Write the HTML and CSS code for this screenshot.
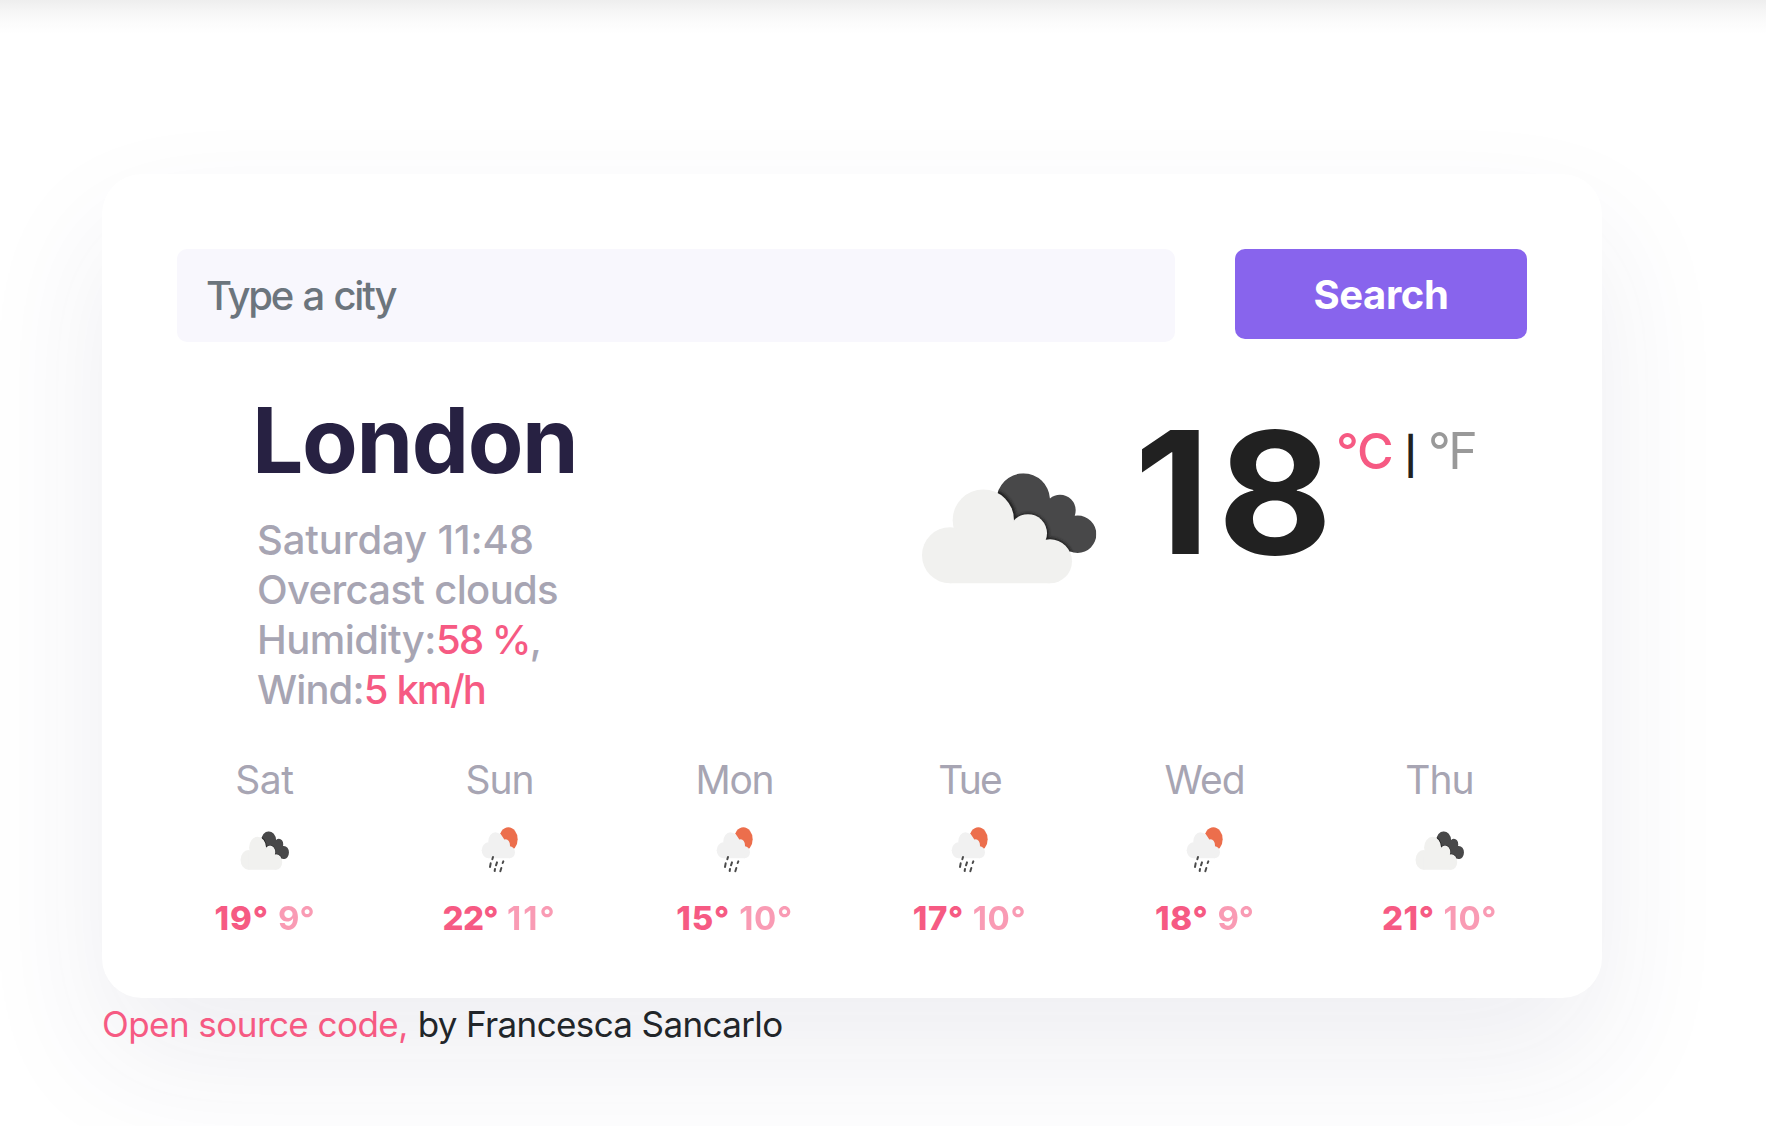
FILE: index.html
```
<!DOCTYPE html>
<html lang="en">
<head>
<meta charset="utf-8">
<title>Weather</title>
<link rel="stylesheet" href="styles.css">
</head>
<body>
<svg class="defs" width="0" height="0">
  <defs>
    <clipPath id="dark-shape">
      <circle cx="370" cy="150" r="80"/><circle cx="480" cy="181" r="47"/><circle cx="533" cy="252" r="56"/>
      <path d="M300 128L370 150L480 181L533 252L508 306L440 275L345 215Z"/>
    </clipPath>
    <filter id="soft" x="-20%" y="-20%" width="140%" height="140%"><feGaussianBlur stdDeviation="4"/></filter>
    <symbol id="overcast" viewBox="60 60 540 350" preserveAspectRatio="none">
      <g clip-path="url(#dark-shape)">
        <rect x="280" y="60" width="320" height="260" fill="#484849"/>
        <g fill="#1c1c1d" filter="url(#soft)"><circle cx="250" cy="210" r="99"/><circle cx="384" cy="251" r="62"/><circle cx="450" cy="333" r="70"/></g>
      </g>
      <g fill="#f1f1ef">
        <circle cx="250" cy="210" r="92"/><circle cx="384" cy="249" r="57"/><circle cx="450" cy="333" r="66"/><circle cx="150" cy="315" r="84"/>
        <path d="M150 399V250L250 200L384 245L450 290V399Z"/>
      </g>
    </symbol>
    <symbol id="rain" viewBox="60 45 120 150" preserveAspectRatio="none">
      <ellipse cx="145" cy="88" rx="28" ry="36" fill="#ec6e4c"/>
      <path d="M112 70L122 72L134 90L143 105L162 118L158 135H120Z" fill="#f1f1f1"/>
      <g fill="#f1f1f1">
        <ellipse cx="86" cy="121" rx="21" ry="24"/><ellipse cx="106" cy="94" rx="21" ry="27"/><ellipse cx="137" cy="106" rx="13" ry="18"/><ellipse cx="149" cy="127" rx="16" ry="18"/>
        <path d="M86 145V105L106 90L137 100L149 120V145Z"/>
      </g>
      <g stroke="#4a4a4a" stroke-width="6" stroke-linecap="round">
        <path d="M99 141L97 148M92 160L90 171M111 157L108 166M130 154L128 159M105 177L104 183M124 174L121 184"/>
      </g>
    </symbol>
  </defs>
</svg>
<header class="top-edge"></header>
<main class="container">
  <section class="card">
    <form class="search">
      <input class="search-input" type="text" placeholder="Type a city">
      <button class="search-button" type="button">Search</button>
    </form>
    <div class="current">
      <div class="place">
        <h1 class="city">London</h1>
        <ul class="details">
          <li class="date">Saturday 11:48</li>
          <li class="sky">Overcast clouds</li>
          <li><span class="humidity">Humidity:</span><span class="value humidity-value">58 %</span>,</li>
          <li><span class="wind">Wind:</span><span class="value wind-value">5 km/h</span></li>
        </ul>
      </div>
      <svg class="current-icon"><use href="#overcast"/></svg>
      <div class="temperature"><span>18</span></div>
      <div class="units"><span class="celsius">°C</span><span class="bar">|</span><span class="fahrenheit">°F</span></div>
    </div>
    <div class="forecast">
      <div class="day"><div class="name sat">Sat</div><svg class="icon cloudy"><use href="#overcast"/></svg><div class="temps"><b class="ls1">19°</b><span class="ls0">9°</span></div></div>
      <div class="day"><div class="name">Sun</div><svg class="icon rainy"><use href="#rain"/></svg><div class="temps"><b class="lsn">22°</b><span class="ls2">11°</span></div></div>
      <div class="day"><div class="name mon">Mon</div><svg class="icon rainy"><use href="#rain"/></svg><div class="temps"><b class="ls1">15°</b><span class="ls05">10°</span></div></div>
      <div class="day"><div class="name tue">Tue</div><svg class="icon rainy"><use href="#rain"/></svg><div class="temps"><b class="ls05">17°</b><span class="ls05">10°</span></div></div>
      <div class="day"><div class="name">Wed</div><svg class="icon rainy"><use href="#rain"/></svg><div class="temps"><b class="ls05">18°</b><span class="ls0">9°</span></div></div>
      <div class="day"><div class="name">Thu</div><svg class="icon cloudy"><use href="#overcast"/></svg><div class="temps"><b class="ls05">21°</b><span class="ls05">10°</span></div></div>
    </div>
  </section>
  <footer class="footer"><a class="source">Open source code,</a><span class="author">by Francesca Sancarlo</span></footer>
</main>
</body>
</html>
```
FILE: styles.css
```
* { box-sizing: border-box; }
body {
  margin: 0;
  height: 1126px;
  overflow: hidden;
  background: #fff;
  color: #212529;
  font-family: Inter, "Liberation Sans", sans-serif;
}
.defs { display: block; }
.top-edge {
  height: 34px;
  background: linear-gradient(#eeeeee, #f5f5f5 10px, #fafafa 19px, #fdfdfd 27px, #fff);
}
.container { width: 1500px; margin: 140px 0 0 102px; }
.card {
  height: 824px;
  padding: 75px;
  border-radius: 40px;
  background: #fff;
  box-shadow: 0 60px 130px rgba(50, 50, 93, 0.083);
}
.search { display: flex; gap: 60px; align-items: flex-start; }
.search-input {
  width: 998px;
  height: 93px;
  padding: 0 29px;
  border: 0;
  border-radius: 10px;
  background: #f8f7fd;
  font: 450 40px Inter, "Liberation Sans", sans-serif;
  letter-spacing: -2.2px;
  word-spacing: 2px;
}
.search-input::placeholder { color: #6c757d; opacity: 1; }
.search-button {
  width: 292px;
  height: 90px;
  padding: 0;
  border: 0;
  border-radius: 10px;
  background: #8864ed;
  color: #fff;
  font: 750 40px Inter, "Liberation Sans", sans-serif;
  letter-spacing: -0.4px;
}
.current { display: flex; align-items: flex-start; height: 329px; margin-top: 43px; padding-left: 75px; }
.place { width: 668px; padding-top: 1px; }
.city { margin: 0 0 20px; color: #272142; font-size: 91px; font-weight: 700; line-height: 109px; letter-spacing: -1.4px; }
.details { margin: 0; padding: 0 0 0 5px; list-style: none; color: #a7a5b3; font-size: 40px; font-weight: 500; line-height: 50px; }
.date { letter-spacing: -0.1px; }
.sky { letter-spacing: -0.65px; }
.humidity { letter-spacing: -0.55px; }
.value { color: #f65a83; font-weight: 450; }
.humidity-value { letter-spacing: -1.6px; }
.wind { letter-spacing: -0.9px; }
.wind-value { letter-spacing: -2.2px; word-spacing: 2px; }
.current-icon { width: 180px; height: 117px; margin-top: 85px; }
.temperature { width: 202px; margin: 22px 0 0 34px; color: #212121; font-size: 170px; font-weight: 700; line-height: 170px; letter-spacing: 7px; }
.temperature span { display: inline-block; transform: scaleX(1.04); transform-origin: left; }
.units { display: flex; margin-top: 36px; font-size: 50px; line-height: 60px; }
.celsius { width: 68px; color: #f65a83; font-weight: 450; letter-spacing: -1.3px; }
.bar { width: 24px; padding-top: 5px; color: #212121; font-size: 37px; font-weight: 600; }
.fahrenheit { color: #999; font-weight: 400; letter-spacing: -2.5px; }
.forecast { display: grid; grid-template-columns: repeat(6, 235px); margin: 41px -30px 0; }
.day { display: flex; flex-direction: column; align-items: center; }
.name { color: #a7a5b3; font-size: 39px; line-height: 50px; letter-spacing: -1px; }
.name.sat { letter-spacing: -0.4px; }
.name.mon { letter-spacing: -1.3px; }
.name.tue { letter-spacing: -1.8px; }
.icon { margin: 20px 0 23px; }
.rainy { width: 40px; height: 50px; }
.cloudy { width: 50px; height: 41px; margin: 25px 0 27px 1px; }
.temps { display: flex; gap: 9px; color: #f65a83; font-size: 33px; line-height: 40px; }
.temps b { font-weight: 780; }
.temps span { font-weight: 680; opacity: 0.6; }
.lsn { letter-spacing: -0.6px; }
.ls0 { letter-spacing: 0; }
.ls05 { letter-spacing: 0.6px; }
.ls1 { letter-spacing: 1px; }
.ls2 { letter-spacing: 2px; }
.footer { display: flex; gap: 10px; font-size: 35px; line-height: 52px; }
.source { color: #f65a83; letter-spacing: -0.55px; }
.author { letter-spacing: -0.63px; }
```
